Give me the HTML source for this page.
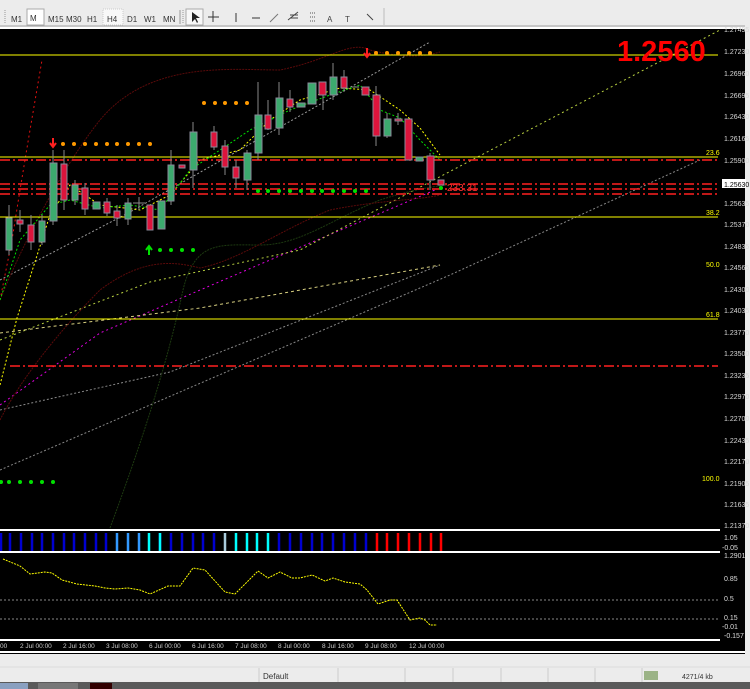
<!DOCTYPE html>
<html><head><meta charset="utf-8"><style>
body{margin:0;width:750px;height:689px;overflow:hidden;background:#000;font-family:"Liberation Sans",sans-serif}
svg{display:block}
</style></head><body>
<svg width="750" height="689" xmlns="http://www.w3.org/2000/svg" font-family="Liberation Sans, sans-serif">
<rect x="0" y="0" width="750" height="28" fill="#ececec"/>
<line x1="0" y1="26" x2="750" y2="26" stroke="#a0a0a0"/>
<rect x="27" y="9" width="17" height="16" fill="#fff" stroke="#aaa"/>
<rect x="103" y="9" width="20" height="16" fill="#f8f8f8" stroke="#ccc" stroke-dasharray="1 1"/>
<rect x="186" y="9" width="17" height="16" fill="#f8f8f8" stroke="#aaa"/>
<g font-size="8" fill="#333">
<text x="11" y="22">M1</text><text x="30" y="21">M</text><text x="48" y="22">M15</text><text x="66" y="22">M30</text>
<text x="87" y="22">H1</text><text x="107" y="22">H4</text><text x="127" y="22">D1</text><text x="144" y="22">W1</text><text x="163" y="22">MN</text>
</g>
<line x1="5" y1="10" x2="5" y2="24" stroke="#999" stroke-dasharray="1 1"/>
<line x1="180" y1="10" x2="180" y2="24" stroke="#999"/><line x1="183" y1="10" x2="183" y2="24" stroke="#999" stroke-dasharray="1 1"/>
<line x1="384" y1="8" x2="384" y2="25" stroke="#bbb"/>
<path d="M192 12 l0 10 3-3 2 4 1-1-2-4 4 0z" fill="#222"/>
<path d="M213 11v11M208 17h11" stroke="#333"/>
<path d="M236 13v9" stroke="#333"/><path d="M252 18h8" stroke="#333"/><path d="M270 22l8-8" stroke="#777"/>
<path d="M288 20l10-8M290 15h8M290 18h8" stroke="#444"/><path d="M310 13h6M310 17h6M310 21h6" stroke="#555" stroke-dasharray="1 1"/>
<text x="327" y="22" font-size="8" fill="#444">A</text><text x="345" y="22" font-size="8" fill="#444">T</text><path d="M367 14l6 6" stroke="#444"/>
<line x1="0" y1="28" x2="750" y2="28" stroke="#fff" stroke-width="2"/>
<rect x="745" y="0" width="5" height="689" fill="#ececec"/>
<g fill="none" stroke-width="1">
<polyline points="0,470 450,275 700,160" stroke="#888" stroke-dasharray="2 2"/>
<polyline points="0,410 170,372 440,265" stroke="#888" stroke-dasharray="2 2"/>
<polyline points="0,280 130,212 430,42" stroke="#999" stroke-dasharray="2 2"/>
<polyline points="0,405 100,333 277,257 435,190" stroke="#e000e0" stroke-dasharray="2 3"/>
<polyline points="0,340 150,282 300,250 720,30" stroke="#b8d040" stroke-dasharray="2 3"/>
<polyline points="0,333 200,308 440,265" stroke="#d8d080" stroke-dasharray="3 3"/>
<path d="M0,300 L12,240 L20,190 L30,130 L42,60" stroke="#e01010" stroke-dasharray="2 3"/>
<path d="M110,528 C150,420 170,350 183,290 C195,240 220,245 260,245 C300,245 330,220 380,200 C410,190 440,185 450,185" stroke="#1d3a10" stroke-dasharray="2 1"/>
<path d="M0,300 C20,250 60,170 100,120 C150,60 230,70 280,70 C330,60 350,40 370,50 C410,60 430,55 440,52" stroke="#5a0a0a" stroke-dasharray="2 1"/>
<path d="M0,420 C20,380 60,330 100,290 C140,260 170,260 200,268 C240,260 280,230 330,210 C380,200 420,200 440,195" stroke="#5a0a0a" stroke-dasharray="2 1"/>
<path d="M0,385 L17,318 L50,215 L70,185 L100,205 L140,210 L170,195 L200,160 L240,150 L270,120 L300,100 L340,88 L370,90 L400,110 L420,128 L440,155" stroke="#ffff00" stroke-dasharray="2 2"/>
<path d="M0,300 L20,240 L50,205 L70,200 L100,208 L130,205 L160,210 L190,170 L220,150 L250,130 L290,110 L330,95 L360,85 L380,110 L400,118 L420,140 L440,160" stroke="#00e000" stroke-dasharray="2 2"/>
</g>
<g stroke="#ffff00"><line x1="0" y1="55" x2="718" y2="55"/><line x1="0" y1="157" x2="718" y2="157"/><line x1="0" y1="217" x2="718" y2="217"/><line x1="0" y1="319" x2="718" y2="319"/></g>
<g stroke="#ff2020" stroke-dasharray="10 3 2 3" stroke-width="1.5"><line x1="0" y1="160" x2="718" y2="160"/><line x1="0" y1="184" x2="718" y2="184"/><line x1="0" y1="189" x2="718" y2="189"/><line x1="0" y1="194" x2="718" y2="194"/><line x1="10" y1="366" x2="718" y2="366"/></g>
<g fill="#ffff00" font-size="7"><text x="706" y="155">23.6</text><text x="706" y="215">38.2</text><text x="706" y="267">50.0</text><text x="706" y="317">61.8</text><text x="702" y="481">100.0</text></g>
<g stroke="#888" stroke-width="1">
<line x1="9" y1="205" x2="9" y2="255"/><line x1="20" y1="210" x2="20" y2="232"/><line x1="31" y1="215" x2="31" y2="250"/><line x1="42" y1="215" x2="42" y2="245"/><line x1="53" y1="150" x2="53" y2="225"/><line x1="64" y1="150" x2="64" y2="210"/><line x1="75" y1="180" x2="75" y2="205"/><line x1="85" y1="183" x2="85" y2="215"/><line x1="107" y1="198" x2="107" y2="216"/><line x1="117" y1="205" x2="117" y2="226"/><line x1="128" y1="198" x2="128" y2="225"/><line x1="139" y1="197" x2="139" y2="210"/><line x1="133" y1="203" x2="145" y2="203"/><line x1="171" y1="150" x2="171" y2="205"/><line x1="193" y1="122" x2="193" y2="188"/><line x1="214" y1="126" x2="214" y2="150"/><line x1="225" y1="140" x2="225" y2="175"/><line x1="236" y1="160" x2="236" y2="188"/><line x1="247" y1="150" x2="247" y2="190"/><line x1="258" y1="82" x2="258" y2="160"/><line x1="268" y1="100" x2="268" y2="130"/><line x1="279" y1="82" x2="279" y2="135"/><line x1="290" y1="90" x2="290" y2="112"/><line x1="323" y1="82" x2="323" y2="110"/><line x1="333" y1="63" x2="333" y2="100"/><line x1="344" y1="70" x2="344" y2="92"/><line x1="352" y1="87" x2="359" y2="87"/><line x1="376" y1="86" x2="376" y2="146"/><line x1="387" y1="113" x2="387" y2="138"/><line x1="398" y1="113" x2="398" y2="125"/><line x1="430" y1="153" x2="430" y2="190"/></g>
<g stroke="#8a8a9a">
<rect x="6" y="218" width="6" height="32" fill="#3caa6e"/><rect x="17" y="220" width="6" height="4" fill="#dc143c"/><rect x="28" y="225" width="6" height="17" fill="#dc143c"/><rect x="39" y="221" width="6" height="21" fill="#3caa6e"/><rect x="50" y="163" width="7" height="58" fill="#3caa6e"/><rect x="61" y="164" width="6" height="36" fill="#dc143c"/><rect x="72" y="185" width="6" height="15" fill="#3caa6e"/><rect x="82" y="188" width="6" height="21" fill="#dc143c"/><rect x="93" y="202" width="7" height="7" fill="#3caa6e"/><rect x="104" y="202" width="6" height="11" fill="#dc143c"/><rect x="114" y="211" width="6" height="7" fill="#dc143c"/><rect x="125" y="203" width="6" height="16" fill="#3caa6e"/><rect x="147" y="205" width="6" height="25" fill="#dc143c"/><rect x="158" y="201" width="7" height="28" fill="#3caa6e"/><rect x="168" y="165" width="6" height="36" fill="#3caa6e"/><rect x="179" y="165" width="6" height="3" fill="#dc143c"/><rect x="190" y="132" width="7" height="38" fill="#3caa6e"/><rect x="211" y="132" width="6" height="15" fill="#dc143c"/><rect x="222" y="146" width="6" height="21" fill="#dc143c"/><rect x="233" y="167" width="6" height="11" fill="#dc143c"/><rect x="244" y="153" width="7" height="27" fill="#3caa6e"/><rect x="255" y="115" width="7" height="38" fill="#3caa6e"/><rect x="265" y="115" width="6" height="14" fill="#dc143c"/><rect x="276" y="98" width="7" height="30" fill="#3caa6e"/><rect x="287" y="99" width="6" height="8" fill="#dc143c"/><rect x="297" y="103" width="8" height="4" fill="#3caa6e"/><rect x="308" y="83" width="8" height="21" fill="#3caa6e"/><rect x="319" y="82" width="7" height="13" fill="#dc143c"/><rect x="330" y="77" width="7" height="18" fill="#3caa6e"/><rect x="341" y="77" width="6" height="11" fill="#dc143c"/><rect x="362" y="87" width="7" height="8" fill="#dc143c"/><rect x="373" y="95" width="7" height="41" fill="#dc143c"/><rect x="384" y="119" width="7" height="17" fill="#3caa6e"/><rect x="395" y="119" width="7" height="2" fill="#dc143c"/><rect x="405" y="119" width="7" height="41" fill="#dc143c"/><rect x="416" y="157" width="7" height="4" fill="#3caa6e"/><rect x="427" y="156" width="7" height="24" fill="#dc143c"/><rect x="438" y="180" width="6" height="5" fill="#dc143c"/></g>
<g fill="#ff9900"><circle cx="63" cy="144" r="2"/><circle cx="74" cy="144" r="2"/><circle cx="85" cy="144" r="2"/><circle cx="96" cy="144" r="2"/><circle cx="107" cy="144" r="2"/><circle cx="117" cy="144" r="2"/><circle cx="128" cy="144" r="2"/><circle cx="139" cy="144" r="2"/><circle cx="150" cy="144" r="2"/>
<circle cx="204" cy="103" r="2"/><circle cx="215" cy="103" r="2"/><circle cx="225" cy="103" r="2"/><circle cx="236" cy="103" r="2"/><circle cx="247" cy="103" r="2"/>
<circle cx="376" cy="53" r="2"/><circle cx="387" cy="53" r="2"/><circle cx="398" cy="53" r="2"/><circle cx="409" cy="53" r="2"/><circle cx="420" cy="53" r="2"/><circle cx="430" cy="53" r="2"/></g>
<g fill="#00e000"><circle cx="160" cy="250" r="2"/><circle cx="171" cy="250" r="2"/><circle cx="182" cy="250" r="2"/><circle cx="193" cy="250" r="2"/>
<circle cx="258" cy="191" r="2"/><circle cx="268" cy="191" r="2"/><circle cx="279" cy="191" r="2"/><circle cx="290" cy="191" r="2"/><circle cx="301" cy="191" r="2"/><circle cx="312" cy="191" r="2"/><circle cx="322" cy="191" r="2"/><circle cx="333" cy="191" r="2"/><circle cx="344" cy="191" r="2"/><circle cx="355" cy="191" r="2"/><circle cx="366" cy="191" r="2"/>
<circle cx="1" cy="482" r="2"/><circle cx="9" cy="482" r="2"/><circle cx="20" cy="482" r="2"/><circle cx="31" cy="482" r="2"/><circle cx="42" cy="482" r="2"/><circle cx="53" cy="482" r="2"/><circle cx="441" cy="188" r="2"/></g>
<path d="M149 247v8M146 250l3-4 3 4" stroke="#00e000" stroke-width="2" fill="none"/>
<path d="M53 138v8M50 143l3 4 3-4" stroke="#ff2020" stroke-width="2" fill="none"/>
<path d="M367 48v8M364 53l3 4 3-4" stroke="#ff2020" stroke-width="2" fill="none"/>
<text x="447" y="191" font-size="10" fill="#ff3030">233.31</text>
<text x="617" y="61" font-size="29" font-weight="bold" fill="#ff0000">1.2560</text>
<g fill="#d8d8d8" font-size="7">
<text x="724" y="32">1.27495</text><text x="724" y="54">1.27230</text><text x="724" y="76">1.26960</text><text x="724" y="98">1.26695</text><text x="724" y="119">1.26430</text><text x="724" y="141">1.26165</text><text x="724" y="163">1.25900</text><text x="724" y="206">1.25635</text><text x="724" y="227">1.25370</text><text x="724" y="249">1.24835</text><text x="724" y="270">1.24565</text><text x="724" y="292">1.24300</text><text x="724" y="313">1.24035</text><text x="724" y="335">1.23770</text><text x="724" y="356">1.23500</text><text x="724" y="378">1.23235</text><text x="724" y="399">1.22970</text><text x="724" y="421">1.22700</text><text x="724" y="443">1.22435</text><text x="724" y="464">1.22170</text><text x="724" y="486">1.21905</text><text x="724" y="507">1.21635</text><text x="724" y="528">1.21370</text></g>
<rect x="722" y="179" width="24" height="9" fill="#fff"/><text x="724" y="187" font-size="7" fill="#000">1.25630</text>
<line x1="0" y1="530" x2="720" y2="530" stroke="#fff" stroke-width="2"/>
<line x1="0" y1="552" x2="720" y2="552" stroke="#fff" stroke-width="2"/>
<g stroke-width="2.5">
<g stroke="#0000d0"><path d="M1 533v18M10 533v18M21 533v18M32 533v18M42 533v18M53 533v18M64 533v18M74 533v18M85 533v18M96 533v18M106 533v18M160 533v18M171 533v18M182 533v18M193 533v18M203 533v18M214 533v18M279 533v18M290 533v18M301 533v18M312 533v18M322 533v18M333 533v18M344 533v18M355 533v18M366 533v18"/></g>
<path d="M117 533v18M128 533v18M139 533v18" stroke="#3399ff"/>
<path d="M149 533v18M160 533v18M236 533v18M247 533v18M257 533v18M268 533v18" stroke="#00ffff"/>
<path d="M225 533v18" stroke="#aaccdd"/>
<path d="M377 533v18M387 533v18M398 533v18M409 533v18M420 533v18M431 533v18M441 533v18" stroke="#ff0000"/>
</g>
<g fill="#ddd" font-size="7"><text x="724" y="540">1.05</text><text x="722" y="550">-0.05</text><text x="724" y="558">1.2901</text><text x="724" y="581">0.85</text><text x="724" y="601">0.5</text><text x="724" y="620">0.15</text><text x="722" y="629">-0.01</text><text x="724" y="638">-0.157</text></g>
<line x1="0" y1="600" x2="720" y2="600" stroke="#888" stroke-dasharray="2 2"/>
<line x1="0" y1="619" x2="720" y2="619" stroke="#888" stroke-dasharray="2 2"/>
<polyline fill="none" stroke="#ffff00" stroke-dasharray="2 1" points="3,559 20,566 30,574 45,572 52,573 62,580 77,584 95,586 105,588 115,589 128,588 140,590 150,594 168,586 180,586 193,568 205,570 225,592 235,594 258,571 268,578 280,572 292,578 300,578 312,575 325,581 333,578 345,582 360,584 367,590 378,604 390,600 397,600 410,620 420,618 425,620 430,625 437,625"/>
<line x1="0" y1="640" x2="720" y2="640" stroke="#fff" stroke-width="2"/>
<g fill="#ccc" font-size="6.5"><text x="0" y="648">00</text><text x="20" y="648">2 Jul 00:00</text><text x="63" y="648">2 Jul 16:00</text><text x="106" y="648">3 Jul 08:00</text><text x="149" y="648">6 Jul 00:00</text><text x="192" y="648">6 Jul 16:00</text><text x="235" y="648">7 Jul 08:00</text><text x="278" y="648">8 Jul 00:00</text><text x="322" y="648">8 Jul 16:00</text><text x="365" y="648">9 Jul 08:00</text><text x="409" y="648">12 Jul 00:00</text></g>
<line x1="0" y1="652" x2="745" y2="652" stroke="#fff" stroke-width="2"/>
<rect x="0" y="654" width="750" height="35" fill="#ececec"/>
<line x1="0" y1="667" x2="750" y2="667" stroke="#ddd"/>
<g stroke="#ccc"><line x1="259" y1="668" x2="259" y2="682"/><line x1="338" y1="668" x2="338" y2="682"/><line x1="405" y1="668" x2="405" y2="682"/><line x1="453" y1="668" x2="453" y2="682"/><line x1="501" y1="668" x2="501" y2="682"/><line x1="548" y1="668" x2="548" y2="682"/><line x1="595" y1="668" x2="595" y2="682"/><line x1="642" y1="668" x2="642" y2="682"/></g>
<text x="263" y="679" font-size="8" fill="#333">Default</text>
<path d="M645 671v9M647 671v9M649 671v9M651 671v9M653 671v9M655 671v9M657 671v9" stroke="#4a7a20"/>
<text x="682" y="679" font-size="7" fill="#333">4271/4 kb</text>
<rect x="0" y="682" width="750" height="7" fill="#5a5a5a"/>
<rect x="0" y="683" width="28" height="6" fill="#8aa0c0"/><rect x="38" y="683" width="40" height="6" fill="#777"/><rect x="90" y="683" width="22" height="6" fill="#300"/>
</svg>
</body></html>
